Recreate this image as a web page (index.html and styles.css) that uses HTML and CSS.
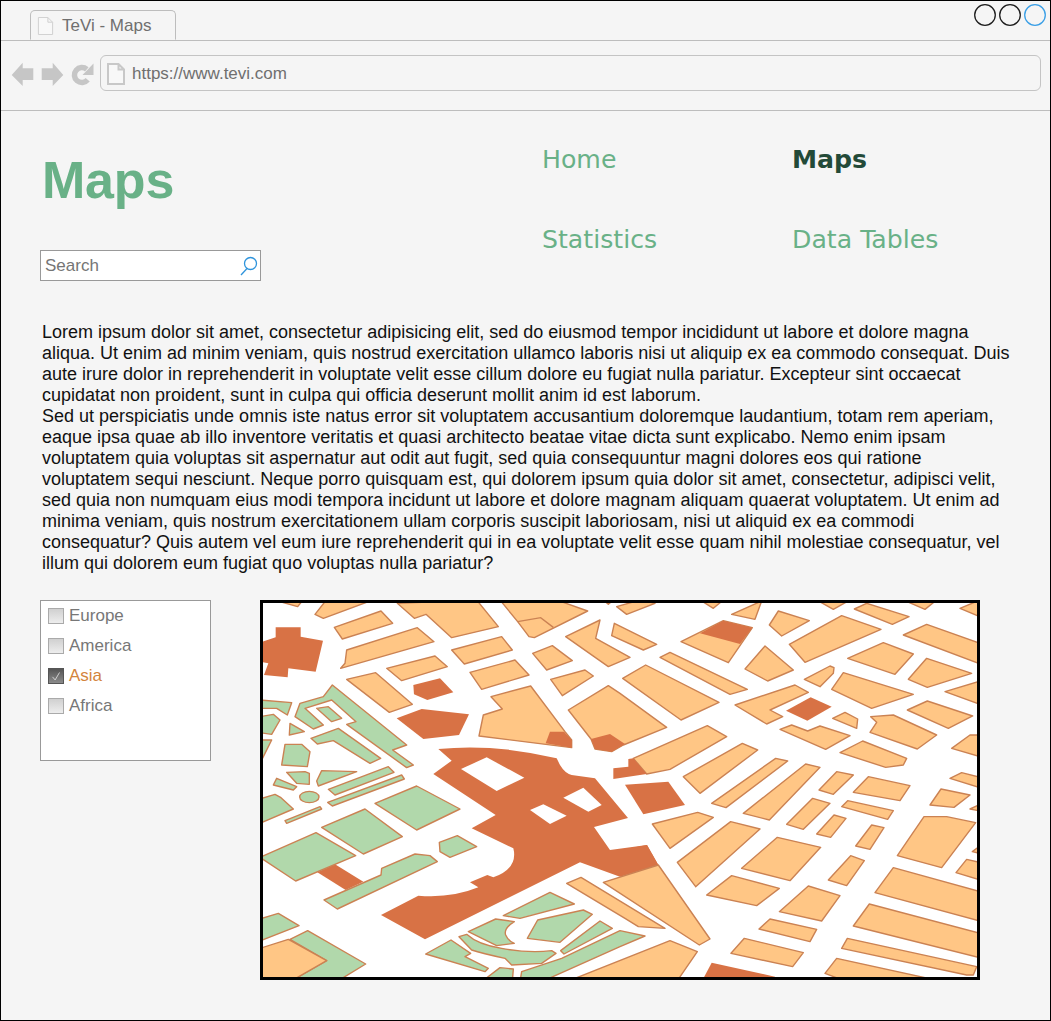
FILE: index.html
```html
<!DOCTYPE html>
<html lang="en">
<head>
<meta charset="utf-8">
<title>TeVi - Maps</title>
<link rel="stylesheet" href="styles.css">
</head>
<body>
<div class="window">
  <div class="tabstrip">
    <div class="tab">
      <svg class="tab-icon" viewBox="0 0 18 21"><path d="M1.500 1.500H11.500L16.500 6.500V19.500H1.500Z M11.500 1.500V6.500H16.500"/></svg>
      <span>TeVi - Maps</span>
    </div>
    <svg class="controls" viewBox="0 0 72 24" aria-hidden="true">
      <circle cx="11" cy="12" r="10.300"/>
      <circle cx="36" cy="12" r="10.300"/>
      <circle class="dot-active" cx="61" cy="12" r="10.300"/>
    </svg>
  </div>
  <div class="toolbar">
    <svg class="nav-icons" viewBox="11 62 84 25" aria-hidden="true">
      <path d="M11.700 75L22.700 62.700V68.300H33.300V80H22.700V86Z"/>
      <path d="M41.700 68.300H52.700V62.700L63.300 75L52.700 86V80H41.700Z"/>
      <path class="reload-arc" d="M86.800 69.300A7.500 7.500 0 1 0 87.700 79.800"/>
      <path d="M93.500 63.500V75H82.500Z"/>
    </svg>
    <div class="address">
      <svg class="addr-icon" viewBox="0 0 18 22"><path d="M1 1H11.500L17 6.500V21H1Z M11.500 1V6.500H17"/></svg>
      <span>https://www.tevi.com</span>
    </div>
  </div>
  <main class="content">
    <header class="masthead">
      <div class="brand">
        <h1 class="title">Maps</h1>
        <div class="search">
          <span>Search</span>
          <svg class="search-icon" viewBox="0 0 18 20"><circle cx="10.500" cy="7.500" r="6"/><path d="M7 12.500L1 19"/></svg>
        </div>
      </div>
      <nav class="nav">
        <a class="nav-link">Home</a>
        <a class="nav-link nav-current">Maps</a>
        <a class="nav-link">Statistics</a>
        <a class="nav-link">Data Tables</a>
      </nav>
    </header>
    <div class="copy">
      <p>Lorem ipsum dolor sit amet, consectetur adipisicing elit, sed do eiusmod tempor incididunt ut labore et dolore magna aliqua. Ut enim ad minim veniam, quis nostrud exercitation ullamco laboris nisi ut aliquip ex ea commodo consequat. Duis aute irure dolor in reprehenderit in voluptate velit esse cillum dolore eu fugiat nulla pariatur. Excepteur sint occaecat cupidatat non proident, sunt in culpa qui officia deserunt mollit anim id est laborum.</p>
      <p>Sed ut perspiciatis unde omnis iste natus error sit voluptatem accusantium doloremque laudantium, totam rem aperiam, eaque ipsa quae ab illo inventore veritatis et quasi architecto beatae vitae dicta sunt explicabo. Nemo enim ipsam voluptatem quia voluptas sit aspernatur aut odit aut fugit, sed quia consequuntur magni dolores eos qui ratione voluptatem sequi nesciunt. Neque porro quisquam est, qui dolorem ipsum quia dolor sit amet, consectetur, adipisci velit, sed quia non numquam eius modi tempora incidunt ut labore et dolore magnam aliquam quaerat voluptatem. Ut enim ad minima veniam, quis nostrum exercitationem ullam corporis suscipit laboriosam, nisi ut aliquid ex ea commodi consequatur? Quis autem vel eum iure reprehenderit qui in ea voluptate velit esse quam nihil molestiae consequatur, vel illum qui dolorem eum fugiat quo voluptas nulla pariatur?</p>
    </div>
    <section class="lower">
      <ul class="regions">
        <li class="region"><span class="box"></span>Europe</li>
        <li class="region"><span class="box"></span>America</li>
        <li class="region region-on"><span class="box box-on"><svg viewBox="0 0 16 16"><path d="M4 9L7 12.500L12 4"/></svg></span>Asia</li>
        <li class="region"><span class="box"></span>Africa</li>
      </ul>
      <div class="map">
        <svg viewBox="263 603 714 374" aria-label="City map">
          <g transform="translate(255 595) scale(.33333)">
            <g class="o">
              <polygon points="75,20 140,20 128,35"/>
              <polygon points="210,20 340,20 205,70 180,58"/>
              <polygon points="238,97 378,48 413,85 262,132"/>
              <polygon points="275,165 487,98 537,140 257,220 270,205"/>
              <polygon points="395,220 540,183 577,215 440,257"/>
              <polygon points="275,253 362,233 472,328 403,352"/>
              <polygon points="427,25 665,15 730,95 590,128 513,58 478,70"/>
              <polygon points="735,15 905,15 998,48 838,128 822,125 788,80"/>
              <polyline points="788,80 857,68 895,97"/>
              <polygon points="590,165 740,125 772,165 628,207"/>
              <polygon points="645,232 780,195 822,240 680,283"/>
              <polygon points="833,175 892,152 952,197 875,225"/>
              <polygon points="887,253 990,225 1015,243 922,302"/>
              <polygon points="932,125 1035,75 1022,130 1125,187 1060,215"/>
              <polygon points="1078,85 1205,148 1165,165 1070,122"/>
              <polygon points="1085,35 1155,15 1200,25 1115,58"/>
              <polygon points="1045,15 1075,15 1060,28"/>
              <polygon points="940,345 1060,272 1095,295 1235,397 1105,450 1070,470 1020,462 1008,432"/>
              <polygon points="708,305 827,273 930,410 950,435 950,458 672,423 685,360 742,342"/>
            </g>
            <g class="r">
              <polygon points="1008,432 1065,417 1110,447 1070,470 1020,462"/>
              <polygon points="885,410 927,410 950,435 950,458 872,445"/>
              <polygon points="15,142 62,127 62,97 137,97 137,125 204,137 182,230 100,220 98,247 27,240 40,205 15,200"/>
              <polygon points="475,270 555,250 595,292 517,315 477,298"/>
              <polygon points="425,370 500,342 642,358 612,420 505,432"/>
            </g>
            <g class="g">
              <polygon points="15,315 110,323 97,360 65,340 15,340"/>
              <polygon points="15,365 55,358 75,375 50,418 15,413"/>
              <polygon points="15,435 50,435 15,505"/>
              <polygon points="105,385 148,410 103,420"/>
              <polygon points="90,448 140,448 165,470 157,515 80,510"/>
              <polygon points="95,532 150,530 163,535 163,568 125,565"/>
              <polygon points="200,527 305,530 190,573 185,558"/>
              <polygon points="65,550 125,575 115,585 55,570"/>
              <polygon points="232,270 455,450 413,465 475,510 455,518 275,388 303,380 230,315 150,340 205,390 175,402 120,365 135,325 205,305"/>
              <polygon points="185,340 220,335 260,370 230,380"/>
              <polygon points="168,430 250,400 377,490 345,505 235,437 187,447"/>
              <polygon points="220,583 400,515 417,532 240,600"/>
              <polygon points="218,622 440,540 448,552 232,633"/>
            </g>
          </g>
          <g transform="translate(620 595) scale(.33333)">
            <g class="o">
              <polygon points="240,15 310,15 280,40"/>
              <polygon points="335,58 425,18 405,73"/>
              <polygon points="183,140 310,77 397,98 325,203"/>
              <polygon points="120,187 150,172 382,283 330,298"/>
              <polygon points="448,90 475,48 568,77 485,123"/>
              <polygon points="375,222 435,153 520,225 443,258"/>
              <polygon points="508,148 665,62 783,103 555,202"/>
              <polygon points="590,15 690,15 640,43"/>
              <polygon points="703,42 740,25 867,65 817,88"/>
              <polygon points="850,120 920,88 1080,145 1080,207"/>
              <polygon points="850,15 950,15 915,43"/>
              <polygon points="1020,40 1080,15 1080,65"/>
              <polygon points="683,190 790,143 880,177 825,238"/>
              <polygon points="865,253 920,190 1055,235 922,277"/>
              <polygon points="975,290 1080,258 1080,328"/>
              <polygon points="553,253 630,213 642,218 640,235 600,275"/>
              <polygon points="635,283 670,233 880,298 755,340"/>
              <polygon points="345,330 525,270 565,292 450,345 488,365 440,387"/>
              <polygon points="638,370 675,352 713,372 710,400"/>
              <polygon points="480,403 515,390 563,408 600,393 690,422 617,463"/>
              <polygon points="752,365 820,360 950,420 892,462 750,412 770,382"/>
              <polygon points="660,473 728,438 860,490 850,510 797,517"/>
              <polygon points="862,345 922,318 1058,363 985,400"/>
              <polygon points="995,460 1050,420 1080,420 1080,485"/>
              <polygon points="990,550 1025,533 1080,547 1080,578"/>
              <polygon points="40,490 262,392 320,425 150,523 80,537"/>
              <polygon points="190,545 367,445 413,465 240,595"/>
              <polygon points="467,490 503,498 318,638 275,625"/>
              <polygon points="557,507 600,517 448,675 370,655"/>
              <polygon points="650,530 700,540 640,598 597,585"/>
              <polygon points="745,545 870,572 840,617 700,592"/>
              <polygon points="8,250 77,210 297,322 183,375"/>
            </g>
            <g class="r">
              <polygon points="240,115 310,77 397,98 360,147"/>
              <polygon points="498,347 572,307 635,335 562,377"/>
              <polygon points="-20,520 25,515 25,492 40,490 80,537 -20,552"/>
            </g>
          </g>
          <g transform="translate(620 785) scale(.33333)">
            <g class="o">
              <polygon points="930,60 963,12 1050,30 1002,67"/>
              <polygon points="1050,72 1080,58 1080,78"/>
              <polygon points="1057,200 1080,183 1080,205"/>
              <polygon points="500,118 578,40 630,55 550,133"/>
              <polygon points="590,147 642,90 678,100 632,157"/>
              <polygon points="665,65 683,47 820,77 803,103"/>
              <polygon points="707,183 755,120 792,128 750,193"/>
              <polygon points="832,212 912,95 980,95 1067,113 965,248"/>
              <polygon points="1008,263 1040,223 1080,232 1080,285"/>
              <polygon points="97,117 233,82 280,97 150,190"/>
              <polygon points="172,232 332,110 420,132 227,305"/>
              <polygon points="365,250 472,157 602,187 510,287"/>
              <polygon points="260,330 335,272 478,310 410,362"/>
              <polygon points="625,285 692,212 733,227 680,302"/>
              <polygon points="478,380 565,303 660,332 605,408"/>
              <polygon points="765,323 820,248 1080,320 1080,408"/>
              <polygon points="700,423 748,357 1080,445 1080,518"/>
              <polygon points="665,490 682,460 1070,545 1060,570 1040,570"/>
              <polygon points="417,432 450,402 590,433 570,470"/>
              <polygon points="333,505 373,460 550,503 518,545"/>
              <polygon points="615,565 650,520 915,578 900,600 680,590"/>
            </g>
            <g class="r">
              <polygon points="245,590 275,533 465,575 465,590"/>
            </g>
          </g>
          <g transform="translate(255 785) scale(.33333)">
            <path class="rf" d="M550,-108Q720,-125 905,-80L915,-60Q930,-35 950,-30L1020,-20L1119,99L1017,126L1065,195L1176,180L1210,240L1095,275L975,232L510,463L378,390L490,332Q590,340 670,307L645,292L697,270L715,277Q790,250 775,190L650,130L722,90L535,-33L590,-73Z"/>
            <g class="w">
              <polygon points="618,-48 695,-83 808,-22 725,18"/>
              <polygon points="925,38 985,8 1040,60 1000,80"/>
              <polygon points="825,75 865,58 935,92 885,117"/>
            </g>
            <g class="r">
              <polygon points="187,262 240,238 325,290 272,315"/>
              <polygon points="1110,-1 1240,-10 1290,60 1165,88"/>
              <polygon points="1095,195 1176,180 1210,240 1095,275"/>
            </g>
            <g class="o">
              <polygon points="1045,292 1210,240 1365,462 1333,480"/>
              <polygon points="935,295 978,277 1230,430 1150,425 1110,400"/>
              <polygon points="935,590 1245,467 1327,500 1265,590"/>
            </g>
            <g class="g">
              <polygon points="795,590 800,560 920,520 1095,437 1170,453 1095,485 860,590"/>
              <ellipse cx="163" cy="36" rx="29" ry="17"/>
              <polygon points="15,42 60,28 78,38 115,72 15,115"/>
              <polygon points="90,107 195,65 200,72 95,115"/>
              <polygon points="200,127 330,72 442,155 325,207"/>
              <polygon points="360,55 485,3 615,72 485,135"/>
              <polygon points="15,217 183,143 302,212 122,288"/>
              <polygon points="207,345 378,270 380,250 480,207 525,212 547,230 247,372"/>
              <polygon points="553,172 607,152 665,185 585,217 555,200"/>
              <polygon points="15,402 70,385 132,422 15,468"/>
              <polygon points="105,463 158,437 332,537 245,590 105,590 215,527"/>
              <polygon points="745,392 885,322 958,357 795,400"/>
              <path d="M640,440L722,402L778,410Q745,430 752,450Q760,468 778,475L725,482Z"/>
              <polygon points="817,460 848,405 985,375 1012,388 915,472"/>
              <polygon points="917,497 1035,408 1072,430 927,507"/>
              <path d="M612,455L635,448Q670,480 740,490Q820,505 890,497L903,505L860,535L770,540L750,520Q680,505 650,495Z"/>
              <polygon points="512,507 588,465 647,505 630,515 700,550 690,560"/>
              <polygon points="680,590 735,548 775,552 772,590"/>
            </g>
            <g class="o">
              <polygon points="15,490 100,463 215,527 105,590 15,590"/>
            </g>
          </g>
        </svg>
      </div>
    </section>
  </main>
</div>
</body>
</html>
```
FILE: styles.css
```css
* { box-sizing: border-box; }
html, body { margin: 0; padding: 0; }
body { font-family: "Liberation Sans", Arial, sans-serif; background: #f5f5f5; }
.window {
  width: 1051px;
  height: 1021px;
  border: 1px solid #000;
  background: #f5f5f5;
  overflow: hidden;
}
.tabstrip {
  height: 40px;
  display: flex;
  align-items: flex-start;
  padding-left: 29px;
  border-bottom: 1px solid #bdbdbd;
}
.tab {
  width: 146px;
  height: 30px;
  margin-top: 9px;
  display: flex;
  align-items: center;
  gap: 8px;
  padding: 2px 0 0 6px;
  font-size: 17px;
  color: #6f6f6f;
  background: #f5f5f5;
  border: 1px solid #bdbdbd;
  border-bottom: 1px solid #f5f5f5;
  border-radius: 5px 5px 0 0;
}
.tab-icon { width: 17px; height: 20px; fill: #f8f8f8; stroke: #cfcfcf; stroke-width: 1; flex: none; }
.controls { margin-left: auto; margin-right: 4px; margin-top: 2px; width: 72px; height: 24px; fill: none; stroke: #1e1e1e; stroke-width: 1.300; }
.dot-active { stroke: #3a9fe6; }
.toolbar {
  height: 70px;
  display: flex;
  align-items: flex-start;
  padding: 14px 9px 0 10px;
  border-bottom: 1px solid #bdbdbd;
}
.nav-icons { width: 84px; height: 25px; fill: #c6c6c6; flex: none; margin: 7px 5px 0 0; }
.reload-arc { fill: none; stroke: #c6c6c6; stroke-width: 5.500; }
.address {
  flex: 1;
  height: 36px;
  display: flex;
  align-items: center;
  gap: 7px;
  padding: 1px 0 0 6px;
  font-size: 17px;
  color: #6f6f6f;
  border: 1px solid #c4c4c4;
  border-radius: 6px;
}
.addr-icon { width: 18px; height: 22px; fill: #f8f8f8; stroke: #c8c8c8; stroke-width: 2; flex: none; }
.content { padding: 0 0 0 39px; }
.masthead { display: flex; height: 170px; }
.brand { width: 502px; padding-top: 38px; }
.title {
  margin: 0 0 0 2px;
  height: 62px;
  font-size: 52px;
  line-height: 62px;
  font-weight: 700;
  color: #69b187;
  letter-spacing: -0.2px;
}
.search {
  width: 221px;
  height: 31px;
  margin-top: 39px;
  display: flex;
  align-items: center;
  justify-content: space-between;
  padding: 0 2px 0 4px;
  font-size: 17px;
  color: #757575;
  background: #fff;
  border: 1px solid #999;
}
.search-icon { width: 18px; height: 20px; fill: none; stroke: #2f94dc; stroke-width: 1.300; }
.nav {
  display: grid;
  grid-template-columns: 250px 200px;
  grid-auto-rows: 80px;
  padding-top: 29px;
}
.nav-link {
  font-family: "DejaVu Sans", Verdana, sans-serif;
  font-size: 25.200px;
  line-height: 40px;
  color: #69b187;
}
.nav-current { font-weight: 700; color: #234a38; }
.copy {
  margin: 41px 0 0 2px;
  width: 972px;
  font-size: 18px;
  line-height: 21px;
  color: #111;
}
.copy p { margin: 0; }
.lower { display: flex; margin-top: 26px; }
.regions {
  width: 171px;
  height: 161px;
  margin: 0 49px 0 0;
  padding: 0 0 0 7px;
  list-style: none;
  background: #fff;
  border: 1px solid #999;
}
.region {
  height: 30px;
  display: flex;
  align-items: center;
  gap: 5px;
  font-size: 17px;
  color: #777;
}
.region-on { color: #d3843c; }
.box {
  width: 16px;
  height: 16px;
  flex: none;
  border: 1px solid #aaa;
  background: linear-gradient(#d0d0d0, #ededed);
}
.box-on { background: linear-gradient(#555, #8a8a8a); border-color: #555; }
.box svg { display: block; width: 14px; height: 14px; fill: none; stroke: #ddd; stroke-width: 1; }
.map {
  width: 720px;
  height: 380px;
  border: 3px solid #000;
  background: #fff;
  overflow: hidden;
}
.map svg { display: block; width: 714px; height: 374px; }
.o polygon, .o path { fill: #ffc685; stroke: #cb8253; stroke-width: 4.200; stroke-linejoin: round; }
.o polyline { fill: none; stroke: #cb8253; stroke-width: 4.200; }
.g polygon, .g path, .g ellipse { fill: #b1d8ab; stroke: #cb8253; stroke-width: 4.200; stroke-linejoin: round; }
.r polygon, .rf { fill: #d87245; }
.w polygon { fill: #fff; }
```
